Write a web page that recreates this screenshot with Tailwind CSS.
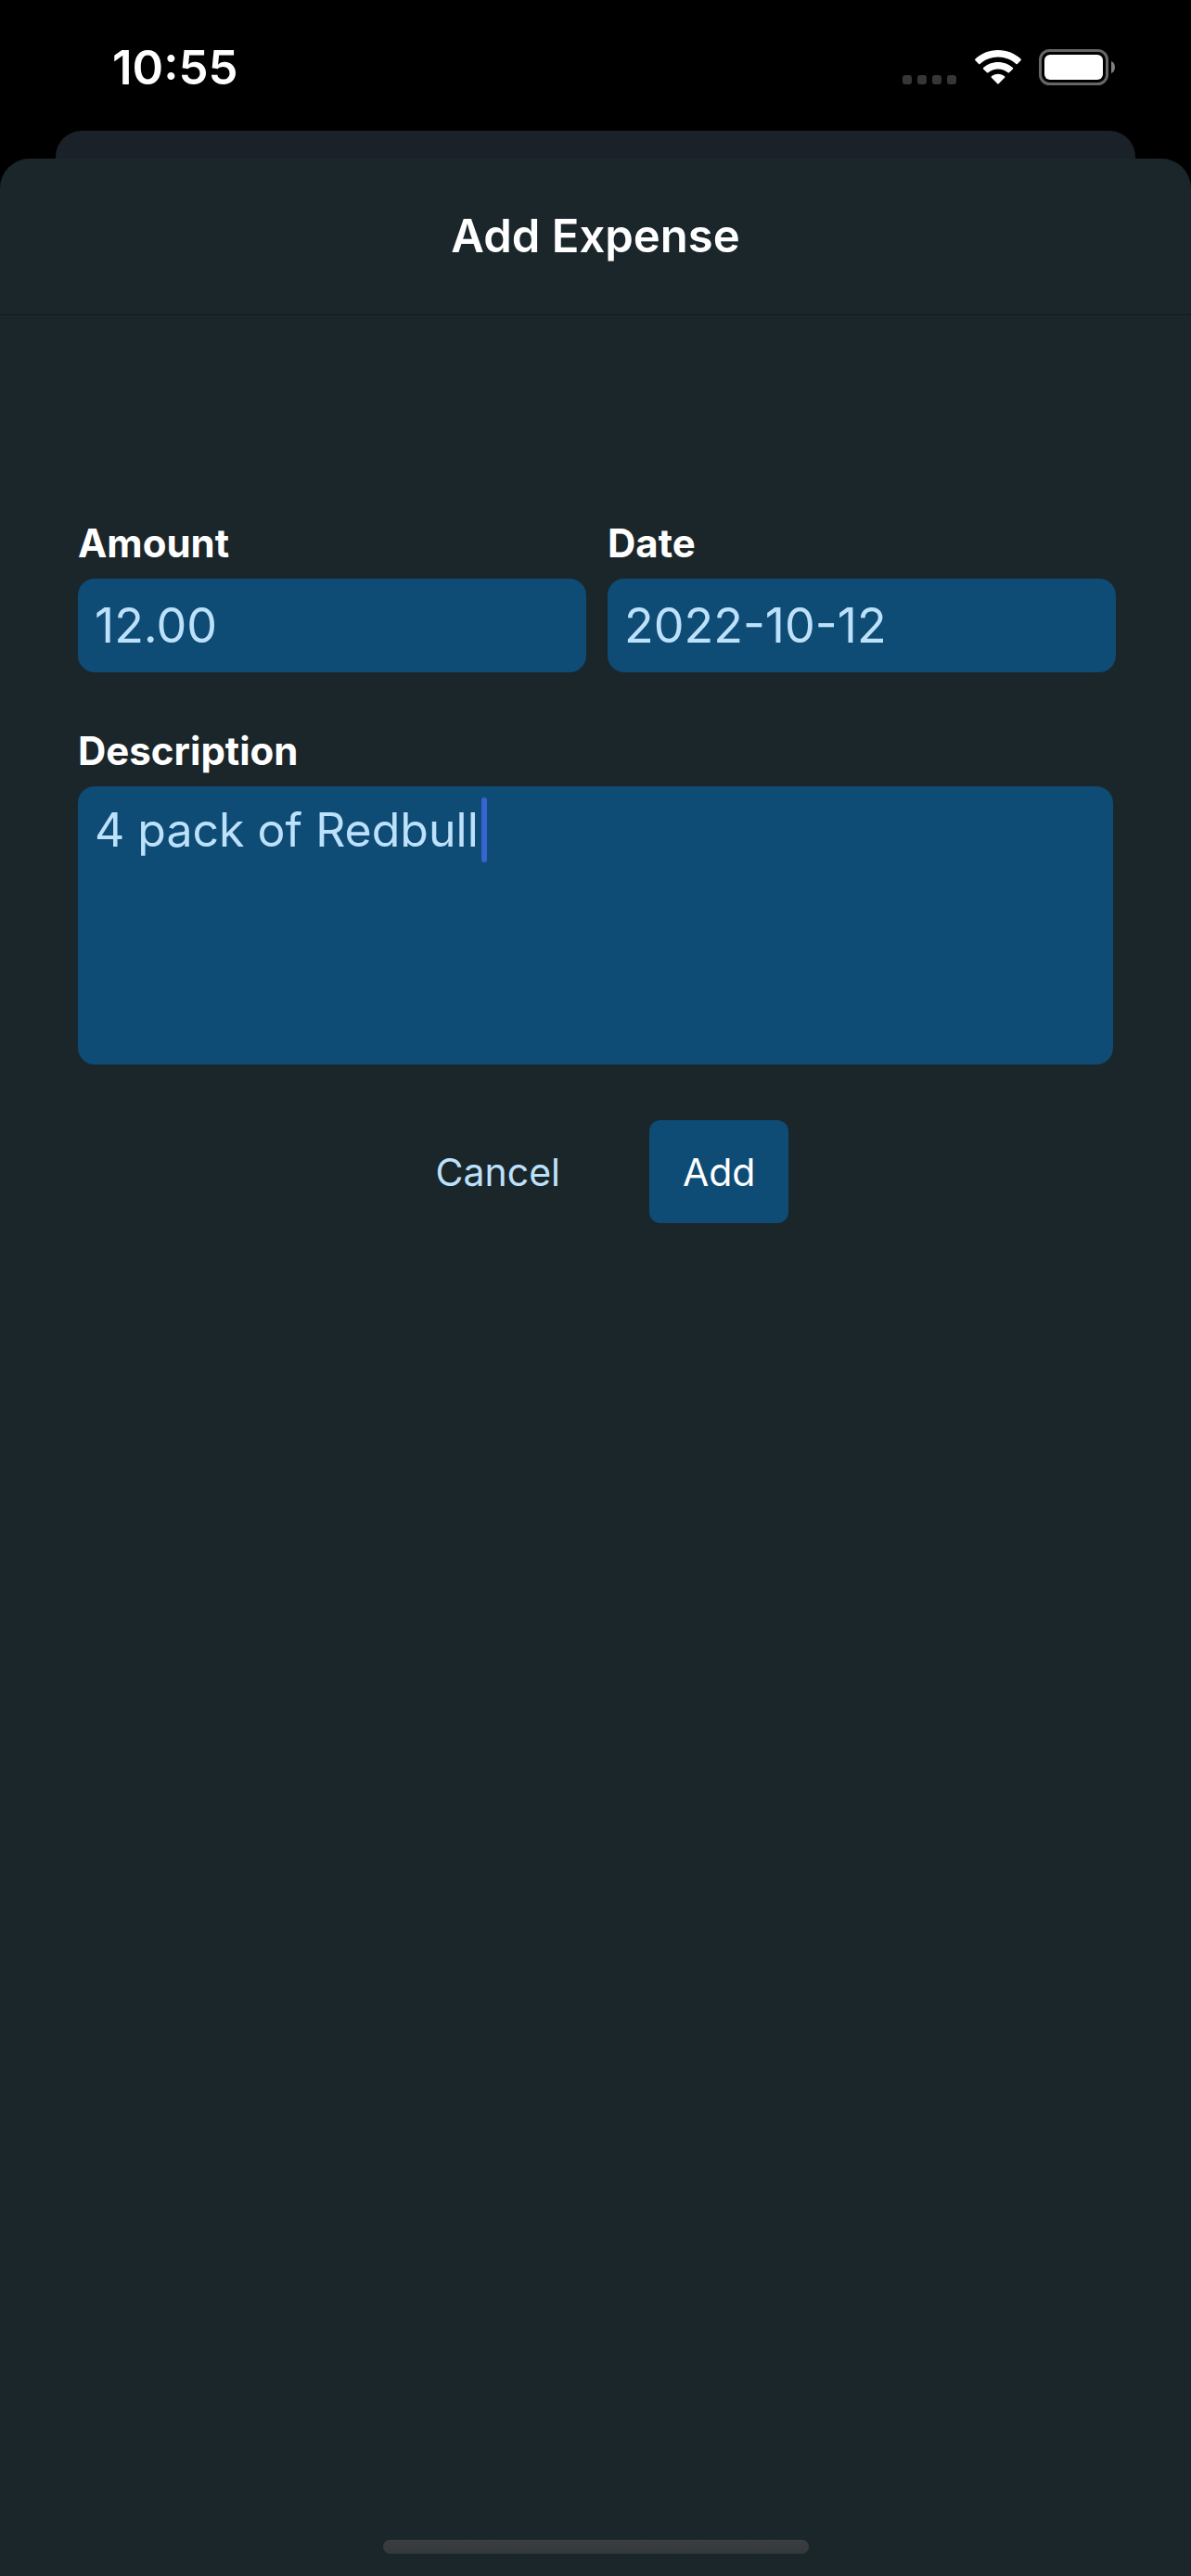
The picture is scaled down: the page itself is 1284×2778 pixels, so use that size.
<!DOCTYPE html>
<html lang="en">
<head>
<meta charset="utf-8">
<meta name="viewport" content="width=device-width, initial-scale=1">
<title>Add Expense</title>
<script src="https://cdn.jsdelivr.net/npm/@tailwindcss/browser@4"></script>
</head>
<body class="flex min-h-screen flex-col bg-black font-['Inter',sans-serif] text-white">
  <header class="flex h-[141px] items-center justify-between pt-1 pr-[81px] pl-[121px]">
    <time class="text-[51px] leading-[60px] font-semibold">10:55</time>
    <div class="flex items-center gap-[19px]">
      <svg class="h-[40px] w-[60px]" viewBox="0 0 60 40" fill="#363636" role="img" aria-label="No signal">
        <rect x="1" y="28" width="10" height="10" rx="3"/>
        <rect x="17" y="28" width="10" height="10" rx="3"/>
        <rect x="33" y="28" width="10" height="10" rx="3"/>
        <rect x="49" y="28" width="10" height="10" rx="3"/>
      </svg>
      <svg class="h-[40px] w-[50px]" viewBox="0 0 50 40" fill="#fff" role="img" aria-label="Wi-Fi">
        <path d="M25 1C15.400 1 6.700 4.700 .3 10.700Q-.3 11.300 .3 12L4.200 16Q4.900 16.600 5.600 16C10.700 11.300 17.500 8.500 25 8.500S39.300 11.300 44.400 16Q45.100 16.600 45.800 16L49.700 12Q50.300 11.300 49.700 10.700C43.300 4.700 34.600 1 25 1Z"/>
        <path d="M25 14C18.900 14 13.300 16.300 9.100 20.100Q8.400 20.800 9.100 21.500L13 25.300Q13.700 25.900 14.400 25.300C17.200 22.900 20.900 21.400 25 21.400S32.800 22.900 35.600 25.300Q36.300 25.900 37 25.300L40.900 21.500Q41.600 20.800 40.900 20.100C36.700 16.300 31.100 14 25 14Z"/>
        <path d="M25 26.800C22.300 26.800 19.800 27.700 17.900 29.300Q17.200 30 17.900 30.700L24.300 37.200Q25 37.900 25.700 37.200L32.100 30.700Q32.800 30 32.100 29.300C30.200 27.700 27.700 26.800 25 26.800Z"/>
      </svg>
      <svg class="h-[40px] w-[83px]" viewBox="0 0 83 40" role="img" aria-label="Battery full">
        <rect x="1.500" y="1.500" width="72" height="36" rx="10" fill="none" stroke="#666" stroke-width="3"/>
        <rect x="6" y="6" width="63" height="27" rx="6" fill="#fff"/>
        <path d="M78 13C83.300 15 83.300 24 78 26Z" fill="#808080"/>
      </svg>
    </div>
  </header>

  <!-- Edge of the screen stacked behind the sheet -->
  <div class="mx-[60px] -mb-[30px] h-[60px] rounded-t-[28px] bg-[#1a2129]"></div>

  <main class="relative flex grow flex-col rounded-t-[32px] bg-[#1b262b]">
    <div class="flex h-[169px] items-center justify-center border-b border-[#12191d]">
      <h1 class="text-[49px] leading-[60px] font-semibold">Add Expense</h1>
    </div>

    <form class="flex flex-col gap-[60px] pt-[221px] pr-[81px] pl-[84px]">
      <div class="grid grid-cols-2 gap-[23px]">
        <div class="flex flex-col gap-[13px]">
          <label for="amount" class="text-[42px] leading-[50px] font-bold">Amount</label>
          <input id="amount" type="text" inputmode="decimal" value="12.00" class="h-[101px] w-full rounded-[18px] bg-[#0e4b75] px-[18px] text-[52px] text-[#bde1fb] outline-none">
        </div>
        <div class="flex flex-col gap-[13px]">
          <label for="date" class="text-[42px] leading-[50px] font-bold">Date</label>
          <input id="date" type="text" value="2022-10-12" class="h-[101px] w-full rounded-[18px] bg-[#0e4b75] px-[18px] text-[52px] text-[#bde1fb] outline-none">
        </div>
      </div>

      <div class="mr-[3px] flex flex-col gap-[13px]">
        <label for="description" class="text-[42px] leading-[50px] font-bold">Description</label>
        <div class="relative flex">
          <textarea id="description" class="h-[300px] w-full resize-none rounded-[18px] bg-[#0e4b75] px-[18px] py-[12px] text-[50px] leading-[70px] text-[#bde1fb] outline-none">4 pack of Redbull</textarea>
          <span class="absolute top-[12px] left-[435px] h-[70px] w-[6px] rounded-full bg-[#3664d1]"></span>
        </div>
      </div>

      <div class="mr-[3px] flex justify-center gap-[60px] text-[41px] leading-[50px]">
        <button type="button" class="h-[111px] rounded-[12px] px-[36px] text-[#bde1fb]">Cancel</button>
        <button type="submit" class="h-[111px] rounded-[12px] bg-[#0e4b75] px-[36px] text-white">Add</button>
      </div>
    </form>

    <div class="mx-auto mt-auto mb-[24px] h-[15px] w-[459px] rounded-full bg-linear-to-b from-[#3c3e41] to-[#32393c]"></div>
  </main>
</body>
</html>
